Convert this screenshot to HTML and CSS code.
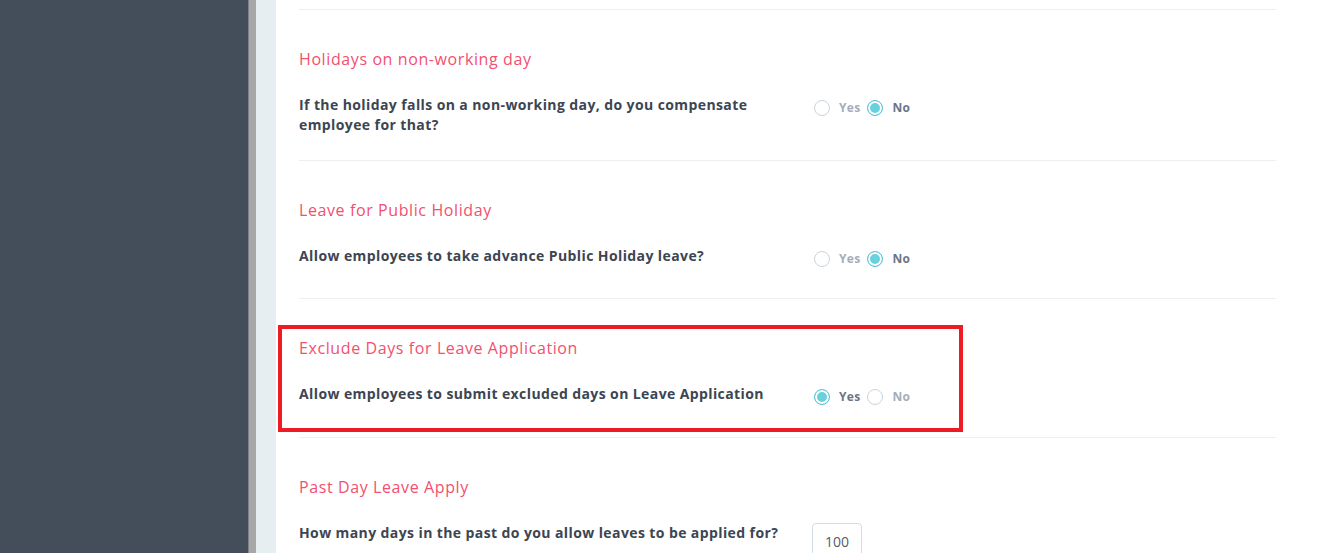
FILE: index.html
```html
<!DOCTYPE html>
<html lang="en">
<head>
    <meta charset="UTF-8">
    <meta name="viewport" content="width=device-width, initial-scale=1.0">
    <title>Leave Settings</title>
    <link rel="stylesheet" href="styles.css">
</head>
<body>
    <aside class="sidebar"></aside>
    <div class="scroll-strip"></div>
    <div class="gutter"></div>

    <main class="panel">
        <div class="previous-end"></div>

        <section class="setting">
            <h2 class="setting-title">Holidays on non-working day</h2>
            <div class="setting-row">
                <p class="question">If the holiday falls on a non-working day, do you compensate employee for that?</p>
                <div class="radio-group">
                    <label class="radio"><span class="dot"></span><span class="radio-text">Yes</span></label>
                    <label class="radio checked"><span class="dot"></span><span class="radio-text">No</span></label>
                </div>
            </div>
        </section>

        <section class="setting">
            <h2 class="setting-title">Leave for Public Holiday</h2>
            <div class="setting-row">
                <p class="question">Allow employees to take advance Public Holiday leave?</p>
                <div class="radio-group">
                    <label class="radio"><span class="dot"></span><span class="radio-text">Yes</span></label>
                    <label class="radio checked"><span class="dot"></span><span class="radio-text">No</span></label>
                </div>
            </div>
        </section>

        <section class="setting highlighted">
            <div class="highlight-box"></div>
            <h2 class="setting-title">Exclude Days for Leave Application</h2>
            <div class="setting-row">
                <p class="question">Allow employees to submit excluded days on Leave Application</p>
                <div class="radio-group">
                    <label class="radio checked"><span class="dot"></span><span class="radio-text">Yes</span></label>
                    <label class="radio"><span class="dot"></span><span class="radio-text">No</span></label>
                </div>
            </div>
        </section>

        <section class="setting">
            <h2 class="setting-title">Past Day Leave Apply</h2>
            <div class="setting-row">
                <p class="question">How many days in the past do you allow leaves to be applied for?</p>
                <input class="days-input" type="text" value="100">
            </div>
        </section>
    </main>
</body>
</html>
```

FILE: styles.css
```css
html, body {
    height: 100%;
}

body {
    margin: 0;
    display: flex;
    overflow: hidden;
    font-family: 'Open Sans', 'Noto Sans', sans-serif;
    background-color: #ffffff;
}

.sidebar {
    width: 248px;
    flex-shrink: 0;
    background-color: #434e5a;
}

.scroll-strip {
    width: 7px;
    flex-shrink: 0;
    background-color: #a7a7a7;
    border-left: 1px solid #7d8289;
}

.gutter {
    width: 20px;
    flex-shrink: 0;
    background-color: #e6eef2;
}

.panel {
    flex: 1;
    padding: 0 58px 0 23px;
}

.previous-end {
    height: 9px;
}

.setting {
    position: relative;
    border-top: 1px solid #eeeeee;
    padding: 38px 0 25px;
}

.setting.highlighted {
    padding-bottom: 26px;
}

.setting-title {
    margin: 0 0 25px;
    font-size: 16px;
    line-height: 22px;
    font-weight: 400;
    letter-spacing: 0.6px;
    color: #f2506f;
}

.setting-row {
    display: flex;
    align-items: flex-start;
    min-height: 27px;
}

.question {
    width: 490px;
    flex-shrink: 0;
    margin: 0 24px 0 0;
    font-size: 14px;
    line-height: 20px;
    font-weight: 700;
    letter-spacing: 0.4px;
    color: #3c4552;
}

.radio-group {
    display: flex;
    align-items: center;
    margin-top: 4px;
    margin-left: 1px;
}

.radio {
    display: flex;
    align-items: center;
    margin-right: 7px;
}

.dot {
    width: 16px;
    height: 16px;
    box-sizing: border-box;
    border: 1px solid #c9d4dc;
    border-radius: 50%;
    margin-right: 9px;
}

.radio-text {
    font-size: 12px;
    font-weight: 700;
    letter-spacing: 0.3px;
    color: #a4adba;
}

.radio.checked .dot {
    border: 1.5px solid #5ac6d7;
    background-color: #6ad0de;
    box-shadow: inset 0 0 0 2px #ffffff;
}

.radio.checked .radio-text {
    color: #6b7585;
}

.highlight-box {
    position: absolute;
    left: -21px;
    top: 26px;
    width: 677px;
    height: 99px;
    border: 4px solid #ed1c24;
}

.days-input {
    width: 50px;
    height: 38px;
    box-sizing: border-box;
    border: 1px solid #d3dde6;
    border-radius: 4px;
    text-align: center;
    font-family: 'Open Sans', sans-serif;
    font-size: 14px;
    line-height: 34px;
    color: #555d6b;
    padding: 0 0 2px;
    margin-left: -1px;
}
```
